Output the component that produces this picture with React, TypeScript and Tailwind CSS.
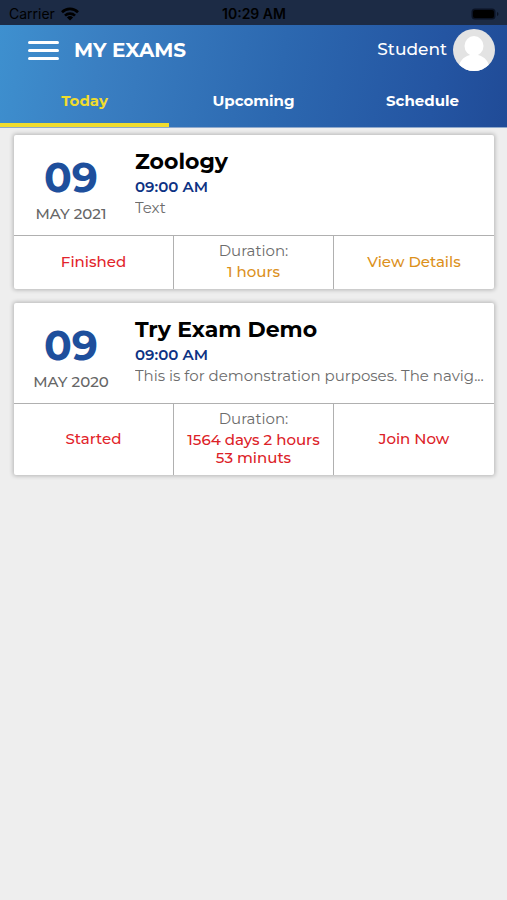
import React from "react";

type Exam = {
  day: string;
  month: string;
  title: string;
  time: string;
  description: string;
  status: string;
  duration: string[];
  action: string;
  late: boolean;
};

const exams: Exam[] = [
  {
    day: "09",
    month: "MAY 2021",
    title: "Zoology",
    time: "09:00 AM",
    description: "Text",
    status: "Finished",
    duration: ["1 hours"],
    action: "View Details",
    late: false,
  },
  {
    day: "09",
    month: "MAY 2020",
    title: "Try Exam Demo",
    time: "09:00 AM",
    description: "This is for demonstration purposes. The navig...",
    status: "Started",
    duration: ["1564 days 2 hours", "53 minuts"],
    action: "Join Now",
    late: true,
  },
];

function StatusBar() {
  return (
    <div className="grid h-[25px] grid-cols-3 items-center bg-[#1c2b45] pt-[3px] pr-2 pl-[9px] font-['Inter',sans-serif] text-sm text-black">
      <div className="flex items-center gap-[6px]">
        <span>Carrier</span>
        <svg viewBox="0 0 18 14" className="h-[14px] w-[18px]" fill="none" stroke="#000" strokeWidth="2.7" aria-hidden="true">
          <path d="M1 5.2a11.5 11.5 0 0 1 16 0" />
          <path d="M4 8.6a7.2 7.2 0 0 1 10 0" />
          <path d="M9 13.6 5.9 10.5a4.5 4.5 0 0 1 6.2 0Z" fill="#000" stroke="none" />
        </svg>
      </div>
      <span className="text-center font-semibold whitespace-nowrap">10:29 AM</span>
      <svg viewBox="0 0 28 12" className="h-3 w-7 justify-self-end" aria-hidden="true">
        <rect x="0.5" y="0.5" width="24" height="11" rx="3.5" fill="#0b1324" />
        <rect x="2" y="2" width="21" height="8" rx="2" fill="#000" />
        <path d="M26 4v4q1.5-.6 1.5-2T26 4Z" fill="#0b1324" />
      </svg>
    </div>
  );
}

function Header() {
  return (
    <header className="bg-linear-[100deg,#3e90cf_0%,#3a7fc2_20%,#2c68b0_55%,#2455a2_85%,#204b97_100%] text-white">
      <div className="flex h-[50px] items-center pr-3 pl-7">
        <button type="button" aria-label="Open menu" className="flex w-[31px] flex-col gap-[5px]">
          <span className="h-[3px] w-full rounded-sm bg-white" />
          <span className="h-[3px] w-full rounded-sm bg-white" />
          <span className="h-[3px] w-full rounded-sm bg-white" />
        </button>
        <h1 className="ml-[15px] text-xl font-bold">MY EXAMS</h1>
        <span className="mr-[6px] ml-auto text-[17px] font-medium">Student</span>
        <svg viewBox="0 0 42 42" className="size-[42px]" role="img" aria-label="Profile picture">
          <defs>
            <clipPath id="avatar">
              <circle cx="21" cy="21" r="21" />
            </clipPath>
          </defs>
          <g clipPath="url(#avatar)">
            <rect width="42" height="42" fill="#e3e3e3" />
            <path d="M5 42C6 32 10 28 17 26v-3h8v3c7 2 11 6 12 16Z" fill="#fff" />
            <ellipse cx="21" cy="17" rx="9.5" ry="10" fill="#fff" />
          </g>
        </svg>
      </div>
      <nav className="grid h-[53px] grid-cols-3 border-b border-[#8fa9cc] text-[15px] font-bold">
        <button type="button" aria-current="page" className="border-b-4 border-[#f0dc2e] pt-1 text-[#f0dc2e]">Today</button>
        <button type="button" className="border-b-4 border-transparent pt-1">Upcoming</button>
        <button type="button" className="border-b-4 border-transparent pt-1">Schedule</button>
      </nav>
    </header>
  );
}

function ExamCard({ exam }: { exam: Exam }) {
  const accent = exam.late ? "text-[#dc2127]" : "text-[#dc911c]";
  return (
    <article className="rounded-xs bg-white shadow-[0_0_4px_1px_rgba(0,0,0,0.24)]">
      <div className="flex h-[100px] pr-2">
        <div className="flex w-[114px] shrink-0 flex-col items-center pt-5">
          <span className="text-[41px] leading-[44px] font-bold text-[#1e4f9c]">{exam.day}</span>
          <span className="mt-1 text-[15px] leading-[22px] font-medium text-[#666666]">{exam.month}</span>
        </div>
        <div className="ml-[7px] min-w-0 flex-1 pt-3">
          <h2 className="text-[22px] leading-[30px] font-bold text-black">{exam.title}</h2>
          <p className="text-[15px] leading-5 font-semibold text-[#0d3283]">{exam.time}</p>
          <p className="truncate text-[15px] leading-[22px] text-[#6c6c6c]">{exam.description}</p>
        </div>
      </div>
      <div className="grid grid-cols-3 divide-x divide-[#b0b0b0] border-t border-[#b0b0b0] text-[15px] font-medium">
        <div className="flex items-center justify-center text-[#e2242b]">{exam.status}</div>
        <div className="pt-[5px] pb-2 text-center">
          <div className="mb-[2px] leading-5 font-normal text-[#6c6c6c]">Duration:</div>
          {exam.duration.map((line) => (
            <div key={line} className={`leading-[18px] whitespace-nowrap ${accent}`}>{line}</div>
          ))}
        </div>
        <button type="button" className={`flex items-center justify-center ${accent}`}>{exam.action}</button>
      </div>
    </article>
  );
}

export default function App() {
  return (
    <div className="min-h-screen bg-[#eeeeee] font-['Montserrat','Inter',sans-serif]">
      <StatusBar />
      <Header />
      <main className="flex flex-col gap-[14px] pt-[7px] pr-[13px] pb-4 pl-[14px]">
        {exams.map((exam) => (
          <ExamCard key={exam.title} exam={exam} />
        ))}
      </main>
    </div>
  );
}
